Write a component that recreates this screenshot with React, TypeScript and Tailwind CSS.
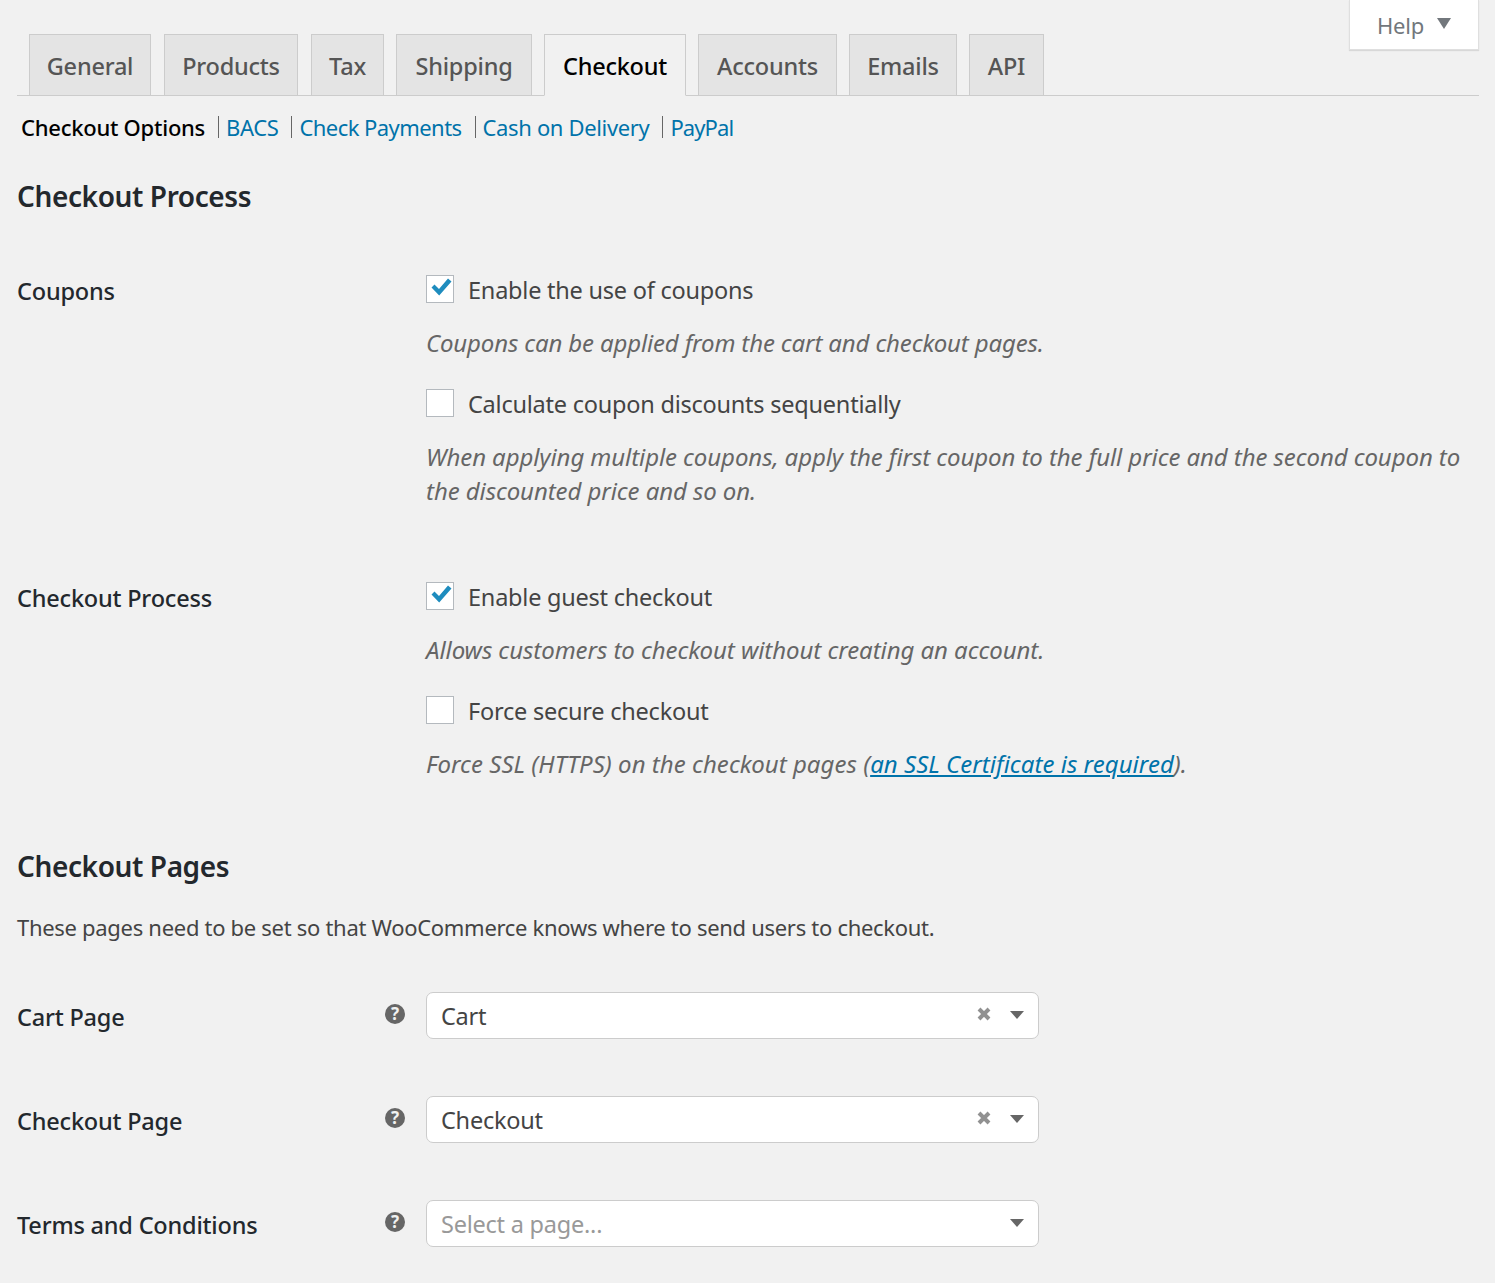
import { ReactNode } from 'react';

const tabs = [
  { name: 'General', w: 'w-[122px] mr-[1px]' },
  { name: 'Products', w: 'w-[134px] mr-[1px]' },
  { name: 'Tax', w: 'w-[73px]' },
  { name: 'Shipping', w: 'w-[136px]' },
  { name: 'Checkout', w: 'w-[142px]', active: true },
  { name: 'Accounts', w: 'w-[139px]' },
  { name: 'Emails', w: 'w-[108px]' },
  { name: 'API', w: 'w-[75px]' },
];

const subLinks = [
  { name: 'BACS', cls: 'tracking-[-0.4px]' },
  { name: 'Check Payments', cls: 'tracking-[-0.55px]' },
  { name: 'Cash on Delivery', cls: 'tracking-[-0.35px]' },
  { name: 'PayPal', cls: 'tracking-[-0.9px]' },
];

function CheckOption({ label, checked, descClass, children }: { label: string; checked?: boolean; descClass: string; children: ReactNode }) {
  return (
    <div>
      <div className="flex items-center h-[28px]">
        <span className="w-[28px] h-[28px] bg-white border border-[#b4b9be] flex items-center justify-center shrink-0">
          {checked && (
            <svg width="26" height="26" viewBox="0 0 26 26">
              <path d="M4.5 11.5 L7.5 8.5 L12 13 L21 2.5 L24.5 5.5 L12.2 19.5 Z" fill="#1e8cbe" />
            </svg>
          )}
        </span>
        <span className="ml-[14px] mt-[4px] text-[#444]">{label}</span>
      </div>
      <p className={`mt-[23px] italic text-[24px] text-[#666] leading-[34px] ${descClass}`}>{children}</p>
    </div>
  );
}

function PageSelect({ value, placeholder }: { value?: string; placeholder?: string }) {
  return (
    <div className="w-[613px] h-[47px] bg-white border border-[#ccc] rounded-[7px] flex items-center pl-[14px] pr-[14px]">
      <span className={value ? 'text-[#444] flex-1 mt-[3px]' : 'text-[#999] flex-1 mt-[3px]'}>{value ?? placeholder}</span>
      {value && (
        <svg width="14" height="14" viewBox="0 0 14 14" className="mr-[19px] -mt-[3px]">
          <path d="M2 2 L12 12 M12 2 L2 12" stroke="#919191" strokeWidth="4" />
        </svg>
      )}
      <svg width="14" height="8" viewBox="0 0 14 8" className="-mt-[2px]">
        <path d="M0 0 H14 L7 8 Z" fill="#666" />
      </svg>
    </div>
  );
}

function SelectRow({ label, value, placeholder }: { label: string; value?: string; placeholder?: string }) {
  return (
    <div className="flex items-center h-[47px]">
      <div className="w-[368px] font-medium tracking-[-0.2px] text-[#23282d] mt-[4px]">{label}</div>
      <div className="w-[41px] -mt-[3px]">
        <span className="block w-[20px] h-[20px] rounded-full bg-[#666] text-[#f1f1f1] text-[17px] leading-[20px] font-bold text-center">?</span>
      </div>
      <PageSelect value={value} placeholder={placeholder} />
    </div>
  );
}

export default function App() {
  return (
    <div className="relative min-h-[1283px] bg-[#f1f1f1] pl-[17px] pr-[16px] overflow-hidden font-['Noto_Sans',sans-serif] text-[23.5px] tracking-[-0.23px]">
      <div className="absolute top-0 right-[16px] w-[130px] h-[50px] bg-white border-x border-b border-[#dfdfdf] shadow-[0_1px_1px_rgba(0,0,0,0.1)] flex items-center text-[#72777c]">
        <span className="ml-[27px] text-[22px] mt-[2px]">Help</span>
        <svg width="14" height="11" viewBox="0 0 14 11" className="ml-[13px] -mt-[3px]">
          <path d="M0 0 H14 L7 11 Z" fill="#72777c" />
        </svg>
      </div>

      <div className="pt-[34px] border-b border-[#ccc] h-[96px] pl-[12px] flex gap-[12px]">
        {tabs.map(t => (
          <div
            key={t.name}
            className={`${t.w} h-[62px] pt-[3px] border border-[#ccc] flex items-center justify-center font-medium ${
              t.active ? 'bg-[#f1f1f1] border-b-[#f1f1f1] text-black' : 'bg-[#e4e4e4] text-[#555]'
            }`}
          >
            {t.name}
          </div>
        ))}
      </div>

      <div className="h-[64px] pl-[4px] pb-[2px] flex items-center text-[#0073aa] text-[22px]">
        <span className="font-medium tracking-[-0.25px] text-black">Checkout Options</span>
        {subLinks.map(l => (
          <span key={l.name} className="flex items-center">
            <span className="ml-[13px] w-[1px] h-[22px] bg-[#666] mr-[7px]" />
            <span className={l.cls}>{l.name}</span>
          </span>
        ))}
      </div>

      <h2 className="mt-[16px] text-[28px] leading-[40px] font-semibold tracking-[-0.4px] text-[#23282d]">Checkout Process</h2>

      <div className="mt-[59px] flex">
        <div className="w-[409px] font-medium tracking-[-0.2px] text-[#23282d] leading-[32px]">Coupons</div>
        <div className="flex-1">
          <CheckOption label="Enable the use of coupons" checked descClass="tracking-[-0.15px]">
            Coupons can be applied from the cart and checkout pages.
          </CheckOption>
          <div className="mt-[29px]">
            <CheckOption label="Calculate coupon discounts sequentially" descClass="tracking-[-0.09px]">
              When applying multiple coupons, apply the first coupon to the full price and the second coupon to the discounted price and so on.
            </CheckOption>
          </div>
        </div>
      </div>

      <div className="mt-[74px] flex">
        <div className="w-[409px] font-medium tracking-[-0.2px] text-[#23282d] leading-[32px]">Checkout Process</div>
        <div className="flex-1">
          <CheckOption label="Enable guest checkout" checked descClass="tracking-[-0.07px]">
            Allows customers to checkout without creating an account.
          </CheckOption>
          <div className="mt-[29px]">
            <CheckOption label="Force secure checkout" descClass="tracking-[0.03px]">
              Force SSL (HTTPS) on the checkout pages (<a className="text-[#0073aa] underline">an SSL Certificate is required</a>).
            </CheckOption>
          </div>
        </div>
      </div>

      <h2 className="mt-[65px] text-[28px] leading-[40px] font-semibold tracking-[-0.4px] text-[#23282d]">Checkout Pages</h2>
      <p className="mt-[24px] leading-[34px] text-[22px] tracking-[-0.3px] text-[#444]">These pages need to be set so that WooCommerce knows where to send users to checkout.</p>

      <div className="mt-[48px] flex flex-col gap-[57px]">
        <SelectRow label="Cart Page" value="Cart" />
        <SelectRow label="Checkout Page" value="Checkout" />
        <SelectRow label="Terms and Conditions" placeholder="Select a page..." />
      </div>
    </div>
  );
}
